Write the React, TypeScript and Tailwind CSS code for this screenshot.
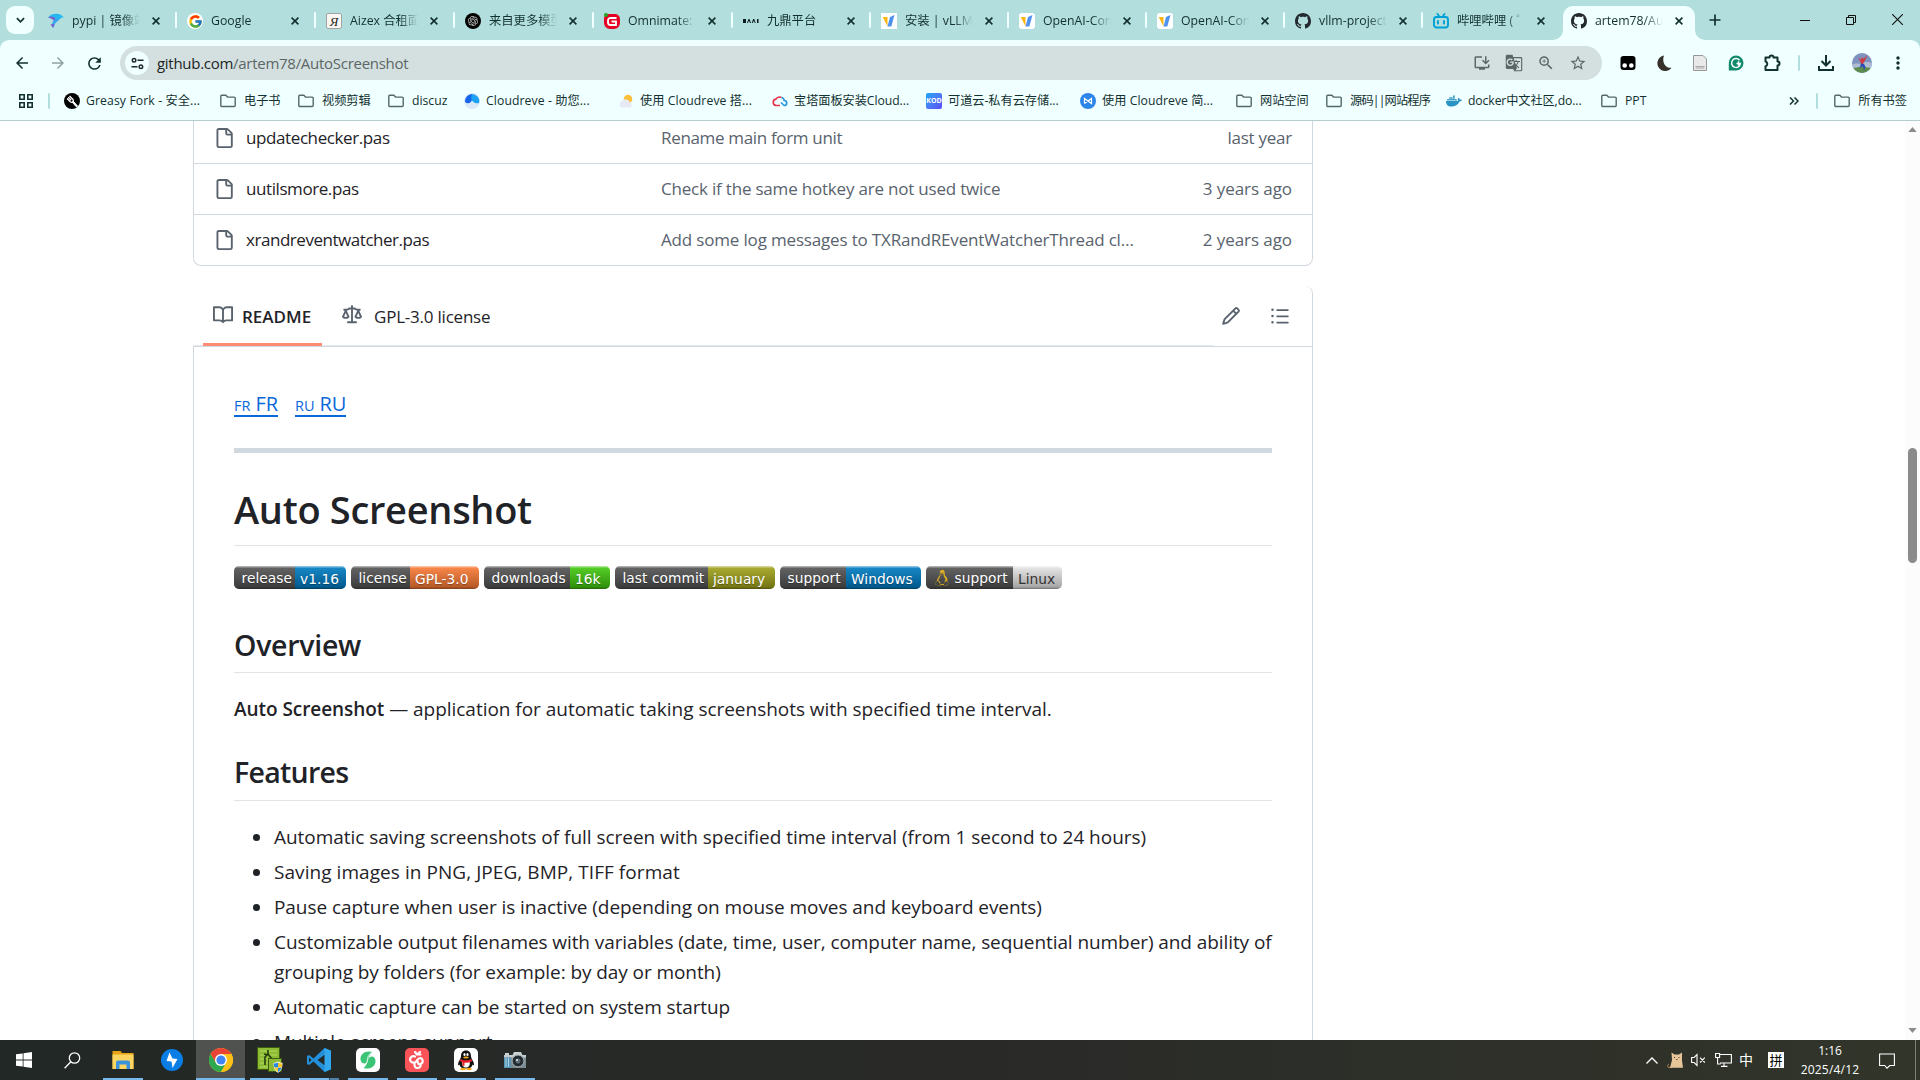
import React, { type ReactNode } from "react";
import { FcGoogle } from "react-icons/fc";
import { FaDocker, FaLinux } from "react-icons/fa";
import { RiOpenaiFill } from "react-icons/ri";
import {
  MdArrowBack,
  MdArrowForward,
  MdRefresh,
  MdOutlineInstallDesktop,
  MdGTranslate,
  MdZoomIn,
  MdStarBorder,
  MdMoreVert,
} from "react-icons/md";

/* ---------- Octicons ---------- */

function Octicon({ d, className }: { d: string; className?: string }) {
  return (
    <svg viewBox="0 0 16 16" fill="currentColor" className={className}>
      <path d={d} />
    </svg>
  );
}

const FILE =
  "M2 1.75C2 .784 2.784 0 3.75 0h6.586c.464 0 .909.184 1.237.513l2.914 2.914c.329.328.513.773.513 1.237v9.586A1.75 1.75 0 0 1 13.25 16h-9.5A1.75 1.75 0 0 1 2 14.25Zm1.75-.25a.25.25 0 0 0-.25.25v12.5c0 .138.112.25.25.25h9.5a.25.25 0 0 0 .25-.25V6h-2.75A1.75 1.75 0 0 1 9 4.25V1.5Zm6.75.062V4.25c0 .138.112.25.25.25h2.688l-.011-.013-2.914-2.914-.013-.011Z";
const BOOK =
  "M0 1.75A.75.75 0 0 1 .75 1h4.253c1.227 0 2.317.59 3 1.501A3.743 3.743 0 0 1 11.006 1h4.245a.75.75 0 0 1 .75.75v10.5a.75.75 0 0 1-.75.75h-4.507a2.25 2.25 0 0 0-1.591.659l-.622.621a.75.75 0 0 1-1.06 0l-.622-.621A2.25 2.25 0 0 0 5.258 13H.75a.75.75 0 0 1-.75-.75Zm7.251 10.324.004-5.073-.002-2.253A2.25 2.25 0 0 0 5.003 2.5H1.5v9h3.757a3.75 3.75 0 0 1 1.994.574ZM8.755 4.75l-.004 7.322a3.752 3.752 0 0 1 1.992-.572H14.5v-9h-3.495a2.25 2.25 0 0 0-2.25 2.25Z";
const LAW =
  "M8.75.75V2h.985c.304 0 .603.08.867.231l1.29.736c.038.022.08.033.124.033h2.234a.75.75 0 0 1 0 1.5h-.427l2.111 4.692a.75.75 0 0 1-.154.838l-.53-.53.529.531-.001.002-.002.002-.006.006-.006.005-.01.01-.045.04c-.21.176-.441.327-.686.45C14.556 10.78 13.88 11 13 11a4.498 4.498 0 0 1-2.023-.454 3.544 3.544 0 0 1-.686-.45l-.045-.04-.016-.015-.006-.006-.004-.004v-.001a.75.75 0 0 1-.154-.838L12.178 4.5h-.162c-.305 0-.604-.079-.868-.231l-1.29-.736a.245.245 0 0 0-.124-.033H8.75V13h2.5a.75.75 0 0 1 0 1.5h-6.5a.75.75 0 0 1 0-1.5h2.5V3.5h-.984a.245.245 0 0 0-.124.033l-1.289.737c-.265.15-.564.23-.869.23h-.162l2.112 4.692a.75.75 0 0 1-.154.838l-.53-.53.529.531-.001.002-.002.002-.006.006-.016.015-.045.04c-.21.176-.441.327-.686.45C4.556 10.78 3.88 11 3 11a4.498 4.498 0 0 1-2.023-.454 3.544 3.544 0 0 1-.686-.45l-.045-.04-.016-.015-.006-.006-.004-.004v-.001a.75.75 0 0 1-.154-.838L2.178 4.5H1.75a.75.75 0 0 1 0-1.5h2.234a.249.249 0 0 0 .125-.033l1.288-.737c.265-.15.564-.23.869-.23h.984V.75a.75.75 0 0 1 1.5 0Zm2.945 8.477c.285.135.718.273 1.305.273s1.02-.138 1.305-.273L13 6.327Zm-10 0c.285.135.718.273 1.305.273s1.02-.138 1.305-.273L3 6.327Z";
const PENCIL =
  "M11.013 1.427a1.75 1.75 0 0 1 2.474 0l1.086 1.086a1.75 1.75 0 0 1 0 2.474l-8.61 8.61c-.21.21-.47.364-.756.445l-3.251.93a.75.75 0 0 1-.927-.928l.929-3.25c.081-.286.235-.547.445-.758l8.61-8.61Zm.176 4.823L9.75 4.81l-6.286 6.287a.253.253 0 0 0-.064.108l-.558 1.953 1.953-.558a.253.253 0 0 0 .108-.064Zm1.238-3.763a.25.25 0 0 0-.354 0L10.811 3.75l1.439 1.44 1.263-1.263a.25.25 0 0 0 0-.354Z";
const LIST =
  "M5.75 2.5h8.5a.75.75 0 0 1 0 1.5h-8.5a.75.75 0 0 1 0-1.5Zm0 5h8.5a.75.75 0 0 1 0 1.5h-8.5a.75.75 0 0 1 0-1.5Zm0 5h8.5a.75.75 0 0 1 0 1.5h-8.5a.75.75 0 0 1 0-1.5ZM2 14a1 1 0 1 1 0-2 1 1 0 0 1 0 2Zm1-6a1 1 0 1 1-2 0 1 1 0 0 1 2 0ZM2 4a1 1 0 1 1 0-2 1 1 0 0 1 0 2Z";
const GITHUB =
  "M8 0c4.42 0 8 3.58 8 8a8.013 8.013 0 0 1-5.45 7.59c-.4.08-.55-.17-.55-.38 0-.27.01-1.13.01-2.2 0-.75-.25-1.23-.54-1.48 1.78-.2 3.65-.88 3.65-3.95 0-.88-.31-1.59-.82-2.15.08-.2.36-1.02-.08-2.12 0 0-.67-.22-2.2.82-.64-.18-1.32-.27-2-.27-.68 0-1.36.09-2 .27-1.53-1.03-2.2-.82-2.2-.82-.44 1.1-.16 1.92-.08 2.12-.51.56-.82 1.28-.82 2.15 0 3.06 1.86 3.75 3.64 3.95-.23.2-.44.55-.51 1.07-.46.21-1.61.55-2.33-.66-.15-.24-.6-.83-1.23-.82-.67.01-.27.38.01.53.34.19.73.9.82 1.13.16.45.68 1.31 2.69.94 0 .67.01 1.3.01 1.49 0 .21-.15.45-.55.38A7.995 7.995 0 0 1 0 8c0-4.42 3.58-8 8-8Z";

/* ---------- Favicons ---------- */

const PypiIcon = () => (
  <svg viewBox="0 0 16 16" className="size-4">
    <path d="M0 4.500C2 1.500 5 1 8 .800c3-.2 5 .4 7.800 3.700-1.500-.3-2.500 0-3.300 1L8.500 8 6 5.500Z" fill="#25b8f0" />
    <path d="M0 4.500C2.500 3 5 3.300 7 5l1.500 2.500-2 1C4.500 6 2.500 4.800 0 4.500Z" fill="#7a62c9" />
    <path d="M6 7c1.500-1.500 4-1.500 6-1.500C10.500 8.500 7 9 6.500 12.500L5 15C3.500 12 4 9 6 7Z" fill="#36a4ee" />
    <path d="M2.500 11.500 6 10.800 5.300 15Z" fill="#8257c9" />
  </svg>
);
const GoogleIcon = () => (
  <div className="flex size-4 items-center justify-center rounded-full bg-white">
    <FcGoogle className="size-[15px]" />
  </div>
);
const AizexIcon = () => (
  <div className="flex size-4 items-center justify-center rounded-[2px] border border-[#a3a3a3] bg-[#faf7f2] font-['Liberation_Serif',serif] text-[13px] leading-none text-[#222] italic">
    Я
  </div>
);
const GptIcon = () => (
  <div className="flex size-4 items-center justify-center rounded-full bg-black">
    <RiOpenaiFill className="size-3 text-[#cfcfcf]" />
  </div>
);
const OmniIcon = () => (
  <svg viewBox="0 0 16 16" className="size-4">
    <path d="M4 1h7a5 5 0 0 1 5 5v4a6 6 0 0 1-6 6H6a6 6 0 0 1-6-6V6a5 5 0 0 1 4-5Z" fill="#e60023" />
    <path d="M12.500 5H6.500A2.500 2.500 0 0 0 4 7.500v2A2.500 2.500 0 0 0 6.500 12H12V8.500H7.500" fill="none" stroke="#fff" strokeWidth="1.800" />
    <circle cx="2" cy="2" r="2" fill="#23a523" />
  </svg>
);
const BaaiIcon = () => (
  <svg viewBox="0 0 16 16" className="size-4" fill="#0b1a1a">
    <path d="M0 6h3v4H0ZM4 10l1.500-4h1L8 10H6.800V8.500H5.200V10ZM8.700 10l1.500-4h1l1.500 4h-1.200V8.500H9.900V10ZM14 6h1.500v4H14Z" />
  </svg>
);
const VllmIcon = ({ rounded }: { rounded?: boolean }) => (
  <svg viewBox="0 0 16 16" className="size-4">
    <rect width="16" height="16" rx={rounded ? 3 : 0} fill="#fff" />
    <path d="M2 4h4.500v9.500L2 4.500Z" fill="#fdb515" />
    <path d="m6.500 13.500 2.500-9.500 4.500-2-3.200 11.500Z" fill="#4f92f0" />
  </svg>
);
const GithubIcon = () => <Octicon d={GITHUB} className="size-4 text-[#24292f]" />;
const BiliIcon = () => (
  <svg viewBox="0 0 16 16" className="size-4" fill="none" stroke="#00a1d6" strokeWidth="1.900">
    <rect x="1" y="4" width="14" height="10.500" rx="2.500" />
    <path d="m4.500 1 2 2.700M11.500 1l-2 2.700M5 8v2.500M11 8v2.500" strokeLinecap="round" />
  </svg>
);

/* ---------- Tab strip ---------- */

type Tab = { title: string; icon: ReactNode; w: string; sep?: boolean; active?: boolean };

const WIDE = "w-[139px]";
const SLIM = "w-[138px]";

const TABS: Tab[] = [
  { w: WIDE, title: "pypi | 镜像站使", icon: <PypiIcon />, sep: true },
  { w: WIDE, title: "Google", icon: <GoogleIcon />, sep: true },
  { w: WIDE, title: "Aizex 合租面板", icon: <AizexIcon />, sep: true },
  { w: WIDE, title: "来自更多模型的", icon: <GptIcon />, sep: true },
  { w: WIDE, title: "Omnimate: AI", icon: <OmniIcon />, sep: true },
  { w: SLIM, title: "九鼎平台", icon: <BaaiIcon />, sep: true },
  { w: SLIM, title: "安装 | vLLM 中", icon: <VllmIcon />, sep: true },
  { w: SLIM, title: "OpenAI-Comp", icon: <VllmIcon rounded />, sep: true },
  { w: SLIM, title: "OpenAI-Comp", icon: <VllmIcon rounded />, sep: true },
  { w: SLIM, title: "vllm-project/v", icon: <GithubIcon />, sep: true },
  { w: SLIM, title: "哔哩哔哩 ( ゜-゜", icon: <BiliIcon /> },
  { w: SLIM, title: "artem78/Auto", icon: <GithubIcon />, active: true },
];

function TabItem({ tab }: { tab: Tab }) {
  return (
    <div className={`flex h-full shrink-0 items-end justify-between ${tab.w}`}>
      <div
        className={
          tab.active
            ? "relative flex h-[34px] w-[132px] items-center rounded-t-[10px] bg-[#f0ffff] pb-1 pl-2"
            : "relative flex h-[34px] w-[132px] items-center pb-1 pl-2"
        }
      >
        {tab.active && (
          <>
            <svg viewBox="0 0 10 10" className="absolute bottom-0 -left-[10px] size-[10px]">
              <path d="M10 0v10H0A10 10 0 0 0 10 0Z" fill="#f0ffff" />
            </svg>
            <svg viewBox="0 0 10 10" className="absolute -right-[10px] bottom-0 size-[10px]">
              <path d="M0 0v10h10A10 10 0 0 1 0 0Z" fill="#f0ffff" />
            </svg>
          </>
        )}
        <span className="size-4 shrink-0">{tab.icon}</span>
        <span className="ml-2 w-[68px] overflow-hidden text-[12.3px] leading-5 whitespace-nowrap text-[#12302f] [mask-image:linear-gradient(to_right,#000_72%,transparent)]">
          {tab.title}
        </span>
        <svg viewBox="0 0 8 8" className="ml-[12px] size-2" stroke="#12302f" strokeWidth="1.600" fill="none">
          <path d="m.6.600 6.800 6.800M7.400.600.600 7.400" />
        </svg>
      </div>
      {tab.sep && <div className="mr-[2px] mb-[12px] h-4 w-[2px] rounded-full bg-[#f0ffff]" />}
    </div>
  );
}

function TabStrip() {
  return (
    <div className="flex h-10 w-full items-start bg-[#b2dfdd]">
      <div className="mt-1.5 ml-1.5 flex h-7 w-7 items-center justify-center rounded-[9px] bg-[#f0ffff]">
        <svg viewBox="0 0 10 6" className="h-[6px] w-[9px]" fill="none" stroke="#12302f" strokeWidth="1.900">
          <path d="m1 1 4 4 4-4" />
        </svg>
      </div>
      <div className="ml-1.5 flex h-10">
        {TABS.map((t, i) => (
          <TabItem key={i} tab={t} />
        ))}
      </div>
      <svg viewBox="0 0 12 12" className="mt-[14px] ml-[8px] size-3" stroke="#12302f" strokeWidth="1.700">
        <path d="M6 .5v11M.5 6h11" />
      </svg>
      <div className="mt-[14px] mr-[17px] ml-auto flex items-center gap-[36px]">
        <svg viewBox="0 0 10 10" className="size-[10px]" stroke="#111" strokeWidth="1">
          <path d="M0 5.500h10" />
        </svg>
        <svg viewBox="0 0 10 10" className="size-[10px]" stroke="#111" fill="none">
          <path d="M.5 2.500h7v7h-7ZM2.500 2.500v-2h7v7h-2" />
        </svg>
        <svg viewBox="0 0 10 10" className="size-[11px]" stroke="#111" fill="none">
          <path d="m0 0 10 10M10 0 0 10" />
        </svg>
      </div>
    </div>
  );
}

/* ---------- Toolbar ---------- */

const Slot = ({ w, children }: { w: string; children: ReactNode }) => (
  <div className={`flex h-full shrink-0 items-center justify-center ${w}`}>{children}</div>
);

function Toolbar() {
  return (
    <div className="bg-[#b2dfdd]">
      <div className="flex h-[46px] w-full items-center rounded-t-[9px] bg-[#f0ffff] text-[#12302f]">
        <Slot w="w-[36px] ml-1">
          <MdArrowBack className="size-[18px]" />
        </Slot>
        <Slot w="w-[36px]">
          <MdArrowForward className="size-[18px] text-[#8fa3a3]" />
        </Slot>
        <Slot w="w-[36px]">
          <MdRefresh className="size-[19px]" />
        </Slot>
        <div className="ml-2 flex h-[34px] w-[1482px] items-center rounded-full bg-[#d4e0e0] pl-[5px]">
          <div className="flex size-6 items-center justify-center rounded-full bg-[#f0ffff]">
            <svg viewBox="0 0 14 14" className="size-[13px]" fill="none" stroke="#222b2b" strokeWidth="1.600">
              <circle cx="3.300" cy="3.500" r="1.900" />
              <path d="M7 3.500h6.500M.5 10.500H7" />
              <circle cx="10.700" cy="10.500" r="1.900" />
            </svg>
          </div>
          <span className="mb-px ml-[8px] flex-1 text-[15px] leading-6 tracking-[-0.28px] whitespace-nowrap text-[#5b6666]">
            <span className="text-[#1b2525]">github.com</span>/artem78/AutoScreenshot
          </span>
          <div className="mr-[8px] flex items-center text-[#5c6666]">
            <Slot w="w-8">
              <MdOutlineInstallDesktop className="size-[18px]" />
            </Slot>
            <Slot w="w-8">
              <MdGTranslate className="size-[18px]" />
            </Slot>
            <Slot w="w-8">
              <MdZoomIn className="size-[18px]" />
            </Slot>
            <Slot w="w-8">
              <MdStarBorder className="size-[18px]" />
            </Slot>
          </div>
        </div>
        <Slot w="w-[36px] ml-2">
          <svg viewBox="0 0 16 16" className="size-4">
            <rect x=".5" y="1" width="15" height="14" rx="3" fill="#000" />
            <circle cx="4.700" cy="10.500" r="2.300" fill="#fff" />
            <circle cx="11.300" cy="10.500" r="2.300" fill="#fff" />
          </svg>
        </Slot>
        <Slot w="w-[36px]">
          <svg viewBox="0 0 16 16" className="size-4">
            <path d="M8 .5a7.800 7.800 0 1 0 7.500 12.300C9.500 13.500 5.500 7 8 .5Z" fill="#37312c" />
          </svg>
        </Slot>
        <Slot w="w-[36px]">
          <svg viewBox="0 0 16 16" className="size-4">
            <path d="M1.500.5h9.500l3.500 3.500v11.500h-13Z" fill="#e9e9e9" stroke="#969696" />
            <path d="M3.500 11.500h9M3.500 13h9" stroke="#a8a8a8" />
          </svg>
        </Slot>
        <Slot w="w-[36px]">
          <svg viewBox="0 0 16 16" className="size-4">
            <path d="M8 .5a7.500 7.500 0 1 1 0 15H.8V8A7.300 7.300 0 0 1 8 .5Z" fill="#0f8a6d" />
            <path d="M11.500 5.300A4.400 4.400 0 1 0 12.400 8.500H8.500M10.500 6.300v4.200" fill="none" stroke="#fff" strokeWidth="1.500" />
          </svg>
        </Slot>
        <Slot w="w-[36px]">
          <svg viewBox="0 0 18 18" className="size-[18px]" fill="none" stroke="#12302f" strokeWidth="2" strokeLinejoin="round">
            <path d="M2.500 3.500h4a2 2 0 0 1 4 0h4v4a2 2 0 0 1 0 4v4.500h-12v-3.700a2.500 2.500 0 0 0 0-4.800Z" />
          </svg>
        </Slot>
        <div className="mx-[8px] h-4 w-[2px] rounded-full bg-[#b2dfdd]" />
        <Slot w="w-[36px]">
          <svg viewBox="0 0 16 16" className="size-4" fill="none" stroke="#12302f" strokeWidth="2">
            <path d="M8 0v10M3.500 6 8 10.500 12.500 6M1 11v3.900h14V11" />
          </svg>
        </Slot>
        <Slot w="w-[36px]">
          <svg viewBox="0 0 20 20" className="size-5 rounded-full">
            <rect width="20" height="20" fill="#7e93bd" />
            <path d="M0 12c4-3 8 0 11-2 3-1.500 6-1 9 0v6H0Z" fill="#aebbd3" />
            <path d="M0 15.500c6-2 14-2 20 0V20H0Z" fill="#5c8d4e" />
            <path d="m6 4.500 3 2 1-2.500 1.500 2L15.500 2 13 7.500l-1.500 2-.5 2-2-.5-.5-2.500Z" fill="#d13a3f" />
            <path d="m9 10.500 3 .5 1.500 3-1.500 4-.5-3.500-1.500-1-2.500 1.500Z" fill="#2a4bb5" />
          </svg>
        </Slot>
        <Slot w="w-[36px]">
          <MdMoreVert className="size-[20px]" />
        </Slot>
      </div>
    </div>
  );
}

/* ---------- Bookmarks ---------- */

const FolderIcon = () => (
  <svg viewBox="0 0 16 16" className="size-4" fill="none" stroke="#52686a" strokeWidth="1.400">
    <path d="M.8 3.300a1 1 0 0 1 1-1h4l1.700 1.800h6.700a1 1 0 0 1 1 1v7.400a1 1 0 0 1-1 1H1.800a1 1 0 0 1-1-1Z" />
  </svg>
);

type Mark = { w: string; icon: ReactNode; label: string; gap?: string; track?: string };

const MARKS: Mark[] = [
  {
    w: "w-[156px]",
    label: "Greasy Fork - 安全...",
    gap: "ml-[6px]",
    track: "tracking-[0.12px]",
    icon: (
      <svg viewBox="0 0 16 16" className="size-4">
        <circle cx="8" cy="8" r="8" fill="#000" />
        <path d="m8.500 9.500 4 4.500 1-1-4-4.500Z" fill="#fff" stroke="#fff" />
        <path d="M3 5.500 6.500 9c1.800 1 3.500-.8 2.500-2.500L5.500 3M4.200 4.200l3 3" stroke="#fff" strokeWidth="1.300" fill="none" />
      </svg>
    ),
  },
  { w: "w-[78px]", label: "电子书", icon: <FolderIcon /> },
  { w: "w-[90px]", label: "视频剪辑", icon: <FolderIcon /> },
  { w: "w-[76px]", label: "discuz", icon: <FolderIcon /> },
  {
    w: "w-[154px]",
    label: "Cloudreve - 助您...",
    gap: "ml-[6px]",
    track: "tracking-[0.1px]",
    icon: (
      <svg viewBox="0 0 16 16" className="size-4">
        <circle cx="8" cy="8" r="8" fill="#d9e9f8" />
        <path d="M1 9A7.200 7.200 0 0 1 8 1l.5 4.500C7 10.500 4 11.500 1 9Z" fill="#1565ea" />
        <path d="M8 1a7.200 7.200 0 0 1 7 9c-4 1-7-1-8-5Z" fill="#1da1f2" />
      </svg>
    ),
  },
  {
    w: "w-[154px]",
    label: "使用 Cloudreve 搭...",
    gap: "ml-[6px]",
    track: "tracking-[0.1px]",
    icon: (
      <svg viewBox="0 0 16 16" className="size-4">
        <circle cx="10" cy="6" r="4.300" fill="#fbbf3c" />
        <path d="M4 14.500a3.200 3.200 0 0 1 .5-6.300 4 4 0 0 1 7.300 1.300 2.600 2.600 0 0 1 .2 5Z" fill="#e7e9f5" />
      </svg>
    ),
  },
  {
    w: "w-[154px]",
    label: "宝塔面板安装Cloud...",
    gap: "ml-[6px]",
    track: "tracking-[-0.05px]",
    icon: (
      <svg viewBox="0 0 16 16" className="size-4" fill="none" strokeWidth="1.700">
        <path d="M8 12.500H4A3.200 3.200 0 0 1 3.800 6.200 4.300 4.300 0 0 1 9.500 4.500" stroke="#e8334a" />
        <path d="M9.500 4.500c1.700.5 2.600 1.700 2.700 3a2.500 2.500 0 0 1 0 5L9 9.500" stroke="#2a97e0" />
      </svg>
    ),
  },
  {
    w: "w-[154px]",
    label: "可道云-私有云存储...",
    gap: "ml-[6px]",
    track: "tracking-[-0.03px]",
    icon: (
      <div className="flex size-4 items-center justify-center rounded-[2px] bg-linear-to-br from-[#12a5f4] to-[#5a4cf5] text-[7px] leading-none font-bold text-white">
        KOD
      </div>
    ),
  },
  {
    w: "w-[156px]",
    label: "使用 Cloudreve 简...",
    gap: "ml-[6px]",
    track: "tracking-[0.05px]",
    icon: (
      <svg viewBox="0 0 16 16" className="size-4">
        <circle cx="8" cy="8" r="8" fill="#2c86ea" />
        <path d="M4.500 10.500v-5l7 5v-5l-7 5" stroke="#fff" strokeWidth="1.200" fill="none" />
      </svg>
    ),
  },
  { w: "w-[90px]", label: "网站空间", icon: <FolderIcon /> },
  { w: "w-[120px]", label: "源码||网站程序", icon: <FolderIcon />, track: "tracking-[-0.8px]" },
  {
    w: "w-[155px]",
    label: "docker中文社区,do...",
    gap: "ml-[6px]",
    track: "tracking-[-0.1px]",
    icon: <FaDocker className="size-4 text-[#2a93c4]" />,
  },
  { w: "w-[60px]", label: "PPT", icon: <FolderIcon /> },
];

function MarkItem({ m }: { m: Mark }) {
  return (
    <div className={`flex shrink-0 items-center ${m.w}`}>
      <span className="size-4 shrink-0">{m.icon}</span>
      <span className={`whitespace-nowrap ${m.gap ?? "ml-2"} ${m.track ?? ""}`}>{m.label}</span>
    </div>
  );
}

function BookmarksBar() {
  return (
    <div className="flex h-[35px] w-full items-center border-b border-[#b4cccb] bg-[#f0ffff] pb-[5px] text-[12.2px] leading-5 text-[#12302f]">
      <svg viewBox="0 0 14 14" className="ml-[19px] size-[14px]" fill="none" stroke="#12302f" strokeWidth="1.600">
        <path d="M.8.800h4.400v4.400H.8ZM8.800.800h4.400v4.400H8.800ZM.8 8.800h4.400v4.400H.8ZM8.800 8.800h4.400v4.400H8.800Z" />
      </svg>
      <div className="mr-[14px] ml-[15px] h-4 w-[2px] rounded-full bg-[#b2dfdd]" />
      {MARKS.map((m, i) => (
        <MarkItem key={i} m={m} />
      ))}
      <div className="mr-[13px] ml-auto flex items-center">
        <svg viewBox="0 0 10 8" className="h-2 w-[10px]" fill="none" stroke="#12302f" strokeWidth="1.500">
          <path d="m1 .5 3.500 3.500L1 7.500M5.500.5 9 4 5.500 7.500" />
        </svg>
        <div className="mr-[16px] ml-[17px] h-4 w-[2px] rounded-full bg-[#b2dfdd]" />
        <FolderIcon />
        <span className="ml-2 whitespace-nowrap">所有书签</span>
      </div>
    </div>
  );
}

/* ---------- Repository page ---------- */

const FILES = [
  {
    name: "updatechecker.pas",
    msg: "Rename main form unit",
    age: "last year",
    nameTrack: "tracking-[-0.4px]",
    msgTrack: "tracking-[-0.33px]",
    ageTrack: "tracking-[-0.25px]",
  },
  {
    name: "uutilsmore.pas",
    msg: "Check if the same hotkey are not used twice",
    age: "3 years ago",
    nameTrack: "tracking-[-0.42px]",
    msgTrack: "tracking-[-0.2px]",
    ageTrack: "tracking-[-0.08px]",
  },
  {
    name: "xrandreventwatcher.pas",
    msg: "Add some log messages to TXRandREventWatcherThread cl…",
    age: "2 years ago",
    nameTrack: "tracking-[-0.46px]",
    msgTrack: "tracking-[-0.17px]",
    ageTrack: "tracking-[-0.08px]",
  },
];

function FileTable() {
  return (
    <div className="ml-[193px] w-[1120px] rounded-b-[8px] border-x border-b border-[#d1d9e0] text-[17px] leading-6 whitespace-nowrap">
      {FILES.map((f, i) => (
        <div
          key={f.name}
          className={
            i === 0
              ? "flex h-[42px] items-end pr-5 pb-[13px] pl-[20px]"
              : "flex h-[51px] items-end border-t border-[#d1d9e0] pr-5 pb-[13px] pl-[20px]"
          }
        >
          <Octicon d={FILE} className="mb-[2px] size-5 text-[#59636e]" />
          <span className={`ml-[12px] w-[415px] text-[#1f2328] ${f.nameTrack}`}>{f.name}</span>
          <span className={`flex-1 text-[#59636e] ${f.msgTrack}`}>{f.msg}</span>
          <span className={`text-[#59636e] ${f.ageTrack}`}>{f.age}</span>
        </div>
      ))}
    </div>
  );
}

type BadgeData = {
  label: string;
  value: string;
  lw: string;
  rw: string;
  color: string;
  dark?: boolean;
  penguin?: boolean;
};

const BADGES: BadgeData[] = [
  { label: "release", value: "v1.16", lw: "w-[61px]", rw: "w-[51px]", color: "bg-[#007ec6]" },
  { label: "license", value: "GPL-3.0", lw: "w-[59px]", rw: "w-[69px]", color: "bg-[#fe7d37]" },
  { label: "downloads", value: "16k", lw: "w-[86px]", rw: "w-[40px]", color: "bg-[#44cc11]" },
  { label: "last commit", value: "january", lw: "w-[93px]", rw: "w-[67px]", color: "bg-[#a4a61d]" },
  { label: "support", value: "Windows", lw: "w-[66px]", rw: "w-[75px]", color: "bg-[#007ec6]" },
  { label: "support", value: "Linux", lw: "w-[87px]", rw: "w-[49px]", color: "bg-[#e8e8e8]", dark: true, penguin: true },
];

const SHEEN =
  "bg-[image:linear-gradient(to_bottom,rgba(255,255,255,.65)_0%,rgba(190,190,190,.12)_10%,rgba(0,0,0,.28)_90%,rgba(0,0,0,.5)_100%)]";

function Badge({ b }: { b: BadgeData }) {
  return (
    <div className="flex h-[23px] overflow-hidden rounded-[5px] font-['DejaVu_Sans',sans-serif] text-[13.75px] leading-[24px] tracking-[0.05px] whitespace-nowrap">
      <div
        className={`flex items-center bg-[#555] pl-[7.5px] text-white [text-shadow:0_1px_rgba(1,1,1,.3)] ${SHEEN} ${b.lw}`}
      >
        {b.penguin && <FaLinux className="mr-[5px] size-4 text-[#e8b61c]" />}
        <span className="pt-px">{b.label}</span>
      </div>
      <div
        className={
          b.dark
            ? `pt-px pl-[5px] text-[#333] [text-shadow:0_1px_rgba(204,204,204,.3)] ${SHEEN} ${b.color} ${b.rw}`
            : `pt-px pl-[5px] text-white [text-shadow:0_1px_rgba(1,1,1,.3)] ${SHEEN} ${b.color} ${b.rw}`
        }
      >
        {b.value}
      </div>
    </div>
  );
}

const FEATURES = [
  {
    track: "tracking-[-0.03px]",
    text: "Automatic saving screenshots of full screen with specified time interval (from 1 second to 24 hours)",
  },
  { track: "tracking-[0.06px]", text: "Saving images in PNG, JPEG, BMP, TIFF format" },
  {
    track: "tracking-[-0.065px]",
    text: "Pause capture when user is inactive (depending on mouse moves and keyboard events)",
  },
  {
    track: "tracking-[-0.08px]",
    text: "Customizable output filenames with variables (date, time, user, computer name, sequential number) and ability of grouping by folders (for example: by day or month)",
  },
  { track: "tracking-[-0.08px]", text: "Automatic capture can be started on system startup" },
  { track: "tracking-[-0.06px]", text: "Multiple screens support" },
];

function Readme() {
  return (
    <div className="mt-5 ml-[193px] w-[1120px]">
      <div className="flex h-[60px] items-start rounded-tr-[8px] border-r border-[#d1d9e0] bg-white">
        <div className="flex h-[60px] w-[1021px] rounded-tl-[8px] border-b border-[#e6eaee] pl-[10px]">
          <div className="flex h-[60px] w-[119px] items-center border-b-[3px] border-[#fd8c73] pt-[3px] pl-[10px]">
            <Octicon d={BOOK} className="mb-[3px] size-5 text-[#59636e]" />
            <span className="mt-[2px] ml-[9px] text-[17px] leading-6 font-semibold text-[#1f2328]">README</span>
          </div>
          <div className="flex h-[60px] items-center pl-5">
            <Octicon d={LAW} className="mb-[3px] size-5 text-[#59636e]" />
            <span className="mt-[2px] ml-[12px] text-[17px] leading-6 tracking-[-0.22px] text-[#1f2328]">
              GPL-3.0 license
            </span>
          </div>
        </div>
        <div className="mr-[22px] ml-auto flex h-[60px] items-center gap-[29px] text-[#59636e]">
          <Octicon d={PENCIL} className="size-5" />
          <Octicon d={LIST} className="size-5" />
        </div>
      </div>
      <article className="h-[760px] border-x border-t border-[#d1d9e0] px-10 pt-[42px] text-[19px] leading-[30px] text-[#1f2328]">
        <div className="flex h-[29px] gap-[17px] text-[#0969da]">
          <span className="h-[28px] border-b-2 border-[#0969da]">
            <span className="text-[14.5px] font-medium">FR</span> <span className="text-[20px]">FR</span>
          </span>
          <span className="h-[28px] border-b-2 border-[#0969da]">
            <span className="text-[14.5px] font-medium">RU</span> <span className="text-[20px]">RU</span>
          </span>
        </div>
        <hr className="mt-[30px] h-[5px] border-0 bg-[#d1d9e0]" />
        <h1 className="mt-[31px] h-[62px] border-b border-[#dfe4e9] text-[38px] leading-[50px] font-semibold tracking-[-0.3px]">
          Auto Screenshot
        </h1>
        <div className="mt-5 flex h-[30px] items-start gap-[5px]">
          {BADGES.map((b, i) => (
            <Badge key={i} b={b} />
          ))}
        </div>
        <h2 className="mt-[30px] h-[47px] border-b border-[#dfe4e9] text-[28.5px] leading-[38px] font-semibold tracking-[-0.27px]">
          Overview
        </h2>
        <p className="mt-[21px] h-[29px] tracking-[-0.03px] whitespace-nowrap">
          <strong className="font-semibold tracking-[-0.06px]">Auto Screenshot</strong> — application for automatic
          taking screenshots with specified time interval.
        </p>
        <h2 className="mt-[30px] h-[48px] border-b border-[#dfe4e9] text-[28.5px] leading-[38px] font-semibold tracking-[-0.7px]">
          Features
        </h2>
        <ul className="mt-[21px] space-y-[5px]">
          {FEATURES.map((f) => (
            <li key={f.text} className="flex">
              <span className="mt-[12px] mr-[14px] ml-[19px] size-[7px] shrink-0 rounded-full bg-[#1f2328]" />
              <span className={`w-[1002px] shrink-0 ${f.track}`}>{f.text}</span>
            </li>
          ))}
        </ul>
      </article>
    </div>
  );
}

function Scrollbar() {
  return (
    <div className="flex w-[15px] shrink-0 flex-col items-center bg-[#fcfcfc]">
      <svg viewBox="0 0 10 6" className="mt-[6px] h-[5px] w-[9px]" fill="#8b8b8b">
        <path d="M5 0 10 6H0Z" />
      </svg>
      <div className="mt-[316px] h-[115px] w-[9px] rounded-full bg-[#8b8b8b]" />
      <svg viewBox="0 0 10 6" className="mt-auto mb-[7px] h-[5px] w-[9px]" fill="#8b8b8b">
        <path d="M0 0h10L5 6Z" />
      </svg>
    </div>
  );
}

/* ---------- Taskbar ---------- */

function TaskItem({ children, open, split, active }: { children: ReactNode; open?: boolean; split?: boolean; active?: boolean }) {
  return (
    <div
      className={
        active
          ? "flex h-10 w-[49px] flex-col items-center bg-[#50524f]"
          : "flex h-10 w-[49px] flex-col items-center"
      }
    >
      <div className="flex h-[38px] items-center pt-[2px]">{children}</div>
      {open && (
        <div className={active ? "flex h-[2px] w-full bg-[#76b9ed]" : "flex h-[2px] w-10 justify-end bg-[#76b9ed]"}>
          {split && <div className="h-full w-[10px] border-l border-[#2b4a63] bg-[#527fa5]" />}
        </div>
      )}
    </div>
  );
}

function Taskbar() {
  return (
    <div className="flex h-10 w-full items-center bg-linear-to-r from-[#222825] via-[#292a28] to-[#32352a] text-white">
      <div className="flex w-12 justify-center">
        <svg viewBox="0 0 16 16" className="size-4" fill="#fff">
          <path d="M0 2.300 6.700 1.400v6.200H0ZM7.500 1.300 16 0v7.600H7.500ZM0 8.400h6.700v6.200L0 13.700ZM7.500 8.400H16V16l-8.500-1.300Z" />
        </svg>
      </div>
      <div className="flex w-[50px] justify-center pr-[2px]">
        <svg viewBox="0 0 17 17" className="size-[17px]" fill="none" stroke="#fff" strokeWidth="1.300">
          <circle cx="10.500" cy="6" r="5.200" />
          <path d="M6.800 9.800.6 16.300" />
        </svg>
      </div>
      <TaskItem open>
        <svg viewBox="0 0 24 24" className="size-6">
          <path d="M1.500 3h8l1.500 2h11.500v16h-21Z" fill="#e6a313" />
          <path d="M1.500 6.500h21V21h-21Z" fill="#fcd462" />
          <path d="M5 21v-6.500a2 2 0 0 1 2-2h10a2 2 0 0 1 2 2V21h-3.500v-4.500h-7V21Z" fill="#3a94dc" />
        </svg>
      </TaskItem>
      <TaskItem>
        <svg viewBox="0 0 24 24" className="size-6">
          <circle cx="12" cy="12" r="11" fill="#0b7ee6" />
          <path d="M9.500 4.500 6.500 13l5 .5 1 6.500 5-9-5-.5Z" fill="#fff" />
        </svg>
      </TaskItem>
      <TaskItem open active>
        <svg viewBox="0 0 24 24" className="size-6">
          <circle cx="12" cy="12" r="12" fill="#fbc116" />
          <path d="M12 12v-6h10.400A12 12 0 0 0 12 0a12 12 0 0 0-10.400 6l5.200 9Z" fill="#ea4335" />
          <path d="M1.600 6a12 12 0 0 0 10.400 18l5.200-9H6.800Z" fill="#2da94f" />
          <path d="M17.200 15 12 24A12 12 0 0 0 22.400 6H12Z" fill="#fbc116" />
          <circle cx="12" cy="12" r="6" fill="#fff" />
          <circle cx="12" cy="12" r="4.600" fill="#4285f4" />
        </svg>
      </TaskItem>
      <TaskItem open>
        <svg viewBox="0 0 26 26" className="size-[26px]">
          <rect x=".5" y=".5" width="22" height="22" fill="#8dbb34" stroke="#3d5c12" />
          <path d="M3 4h17M3 8h17M3 12h17M3 16h17M3 20h10" stroke="#b2d95f" />
          <path d="M11 3v4l-3 3v8M11 7l4 5v6M7 7l4 1" stroke="#253c0a" strokeWidth="1.600" fill="none" />
          <rect x="11.500" y="11.500" width="13" height="13" fill="#8dbb34" stroke="#3d5c12" />
          <path d="M21 14.500c1.500 1 3 1.200 4.500 1.200 0 5-1 8-4.500 10-3.500-2-4.500-5-4.500-10 1.500 0 3-.2 4.500-1.200Z" fill="#fff" />
          <path d="M21 15.500v5h-3.700c-.4-1.200-.5-2.500-.5-4 1.500 0 3-.3 4.200-1ZM21 20.500h3.700c-.7 2-1.700 3.300-3.700 4.500Z" fill="#2587e0" />
          <path d="M21 15.500v5h3.700c.4-1.200.5-2.500.5-4-1.500 0-3-.3-4.200-1ZM21 20.500h-3.700c.7 2 1.700 3.300 3.700 4.500Z" fill="#f6c529" />
        </svg>
      </TaskItem>
      <TaskItem open split>
        <svg viewBox="0 0 24 24" className="size-6">
          <path d="M17.500 0 24 2.800v18.400L17.500 24 6.500 13.500 2 17 0 16V8l2-1 4.500 3.500ZM18 6.500 10.500 12l7.500 5.500ZM2 9.500v5L4.500 12Z" fill="#2490db" fillRule="evenodd" />
          <path d="M17.500 0 24 2.800v18.400L17.500 24Z" fill="#33a8ee" />
        </svg>
      </TaskItem>
      <TaskItem open>
        <svg viewBox="0 0 24 24" className="size-6">
          <rect width="24" height="24" rx="5" fill="#fff" />
          <path d="M16.500 4C10 2 4 5.500 4.500 11.500c.4 4 4 5 6 3 2.500-2.500 1.500-7 6-10.500Z" fill="#3cc476" />
          <path d="M7.500 20c6.500 2 12.500-1.500 12-7.500-.4-4-4-5-6-3-2.500 2.500-1.500 7-6 10.500Z" fill="#3cc476" />
          <path d="M15.500 4.500c-5.500 4-3.500 8.500-5 11" stroke="#fff" strokeWidth=".8" fill="none" />
        </svg>
      </TaskItem>
      <TaskItem open>
        <svg viewBox="0 0 24 24" className="size-6">
          <rect width="24" height="24" rx="5" fill="#fb5458" />
          <g fill="none" stroke="#fff" strokeWidth="2.200" strokeLinecap="round" strokeLinejoin="round">
            <path d="M10 8.500a3.300 3.300 0 1 0-.5 6c1 0 1.700-.7 2.500-2 .8-1.300 2-2.500 3.300-2.500a3.200 3.200 0 0 1 0 6.200" />
            <path d="M9.500 15c-.5 3.500 1 5 3 5s3.800-1.800 2.800-4M12 12.500l1.500 3.500M10 4l2 2.500L15 4M12 6.500h3.500" />
          </g>
        </svg>
      </TaskItem>
      <TaskItem open>
        <svg viewBox="0 0 24 24" className="size-6">
          <rect width="24" height="24" rx="5" fill="#fff" />
          <path d="M12 2.500c-3.500 0-5 2.500-5 6 0 2-3 5-3 8 0 1 .8 1 1.500 0 .5 3 3 4 6.500 4s6-1 6.500-4c.7 1 1.500 1 1.500 0 0-3-3-6-3-8 0-3.500-1.500-6-5-6Z" fill="#111" />
          <path d="M8.500 13h7c1 4-.5 6.500-3.500 6.500S7.500 17 8.500 13Z" fill="#fff" />
          <ellipse cx="10.500" cy="6.500" rx="1.100" ry="1.600" fill="#fff" />
          <ellipse cx="13.500" cy="6.500" rx="1.100" ry="1.600" fill="#fff" />
          <ellipse cx="12" cy="9.500" rx="2.800" ry="1" fill="#f6a81c" />
          <path d="M6.500 11c3 1.800 8 1.800 11 0l.5 2.200c-2.500 1.300-5 1.600-7.500 1.500v3h-2v-3.500L6 13.200Z" fill="#e6202c" />
          <ellipse cx="9" cy="21" rx="2.800" ry="1.300" fill="#f6a81c" />
          <ellipse cx="15" cy="21" rx="2.800" ry="1.300" fill="#f6a81c" />
        </svg>
      </TaskItem>
      <TaskItem open>
        <svg viewBox="0 0 24 24" className="size-6">
          <path d="M1 7h22v13H1Z" fill="#7b8b92" />
          <path d="M2 5h4v2H2ZM11 4h7l1.500 3h-10Z" fill="#c9d3d6" />
          <path d="M1 7h22v2.500H1Z" fill="#c3cdd1" />
          <path d="M1 9.500h7V20H1Z" fill="#5895b4" />
          <path d="M3 10v9M5.500 10v9" stroke="#a9d3e6" />
          <circle cx="15" cy="13" r="6" fill="#2b3236" stroke="#aab5b9" />
          <circle cx="15" cy="13" r="3.300" fill="#5c6a73" stroke="#10161a" />
          <circle cx="14" cy="12" r="1.100" fill="#d6e6f0" />
        </svg>
      </TaskItem>

      <div className="ml-auto flex h-10 items-center">
        <svg viewBox="0 0 12 7" className="h-[7px] w-3" fill="none" stroke="#fff" strokeWidth="1.300">
          <path d="m.5 6.500 5.500-5.500 5.500 5.500" />
        </svg>
        <svg viewBox="0 0 16 16" className="ml-[9px] size-4">
          <path d="M5 15.500H1.500C0 14 1 12.500 2 12" stroke="#b08a58" fill="none" />
          <path d="M3 15.800 5 8 4.500.5 7.500 2.500h4.500L15 .5v8l1 7.300Z" fill="#e6c698" />
          <path d="M7.500 5v1M12 5v1M9.300 7.500h1.200" stroke="#4b3620" />
        </svg>
        <svg viewBox="0 0 15 14" className="ml-[8px] h-[14px] w-[15px]" fill="none" stroke="#fff" strokeWidth="1.100">
          <path d="M.6 4.500h2.500L6 1.500v11L3.100 9.500H.6ZM9 4.700l4.800 4.800M13.800 4.700 9 9.500" />
        </svg>
        <svg viewBox="0 0 17 16" className="ml-[9px] h-4 w-[17px]" fill="none" stroke="#fff" strokeWidth="1.100">
          <path d="M5 2.500h11.400v8.500H5M9 11v3M6 14.400h6.500M.6 1.500h4v4h-4ZM2.600 5.500v6.500h3" />
        </svg>
        <span className="ml-[7px] w-[15px] text-[14px] leading-5">中</span>
        <span className="ml-[14px] flex size-4 items-center justify-center bg-white text-[13px] leading-4 text-black">
          拼
        </span>
        <div className="ml-[16px] flex w-[60px] flex-col items-center text-[12px] leading-[19px] whitespace-nowrap">
          <span>1:16</span>
          <span className="tracking-[0.2px]">2025/4/12</span>
        </div>
        <svg viewBox="0 0 16 16" className="mt-px ml-[19px] size-4" fill="none" stroke="#fff" strokeWidth="1.100">
          <path d="M.6 1h14.800v11.500h-4.600L8 15.200l-2.300-2.700H.6Z" />
        </svg>
        <div className="mr-1 ml-[20px] h-10 w-px bg-[#7d7f78]" />
      </div>
    </div>
  );
}

export default function App() {
  return (
    <div className="flex h-[1080px] w-[1920px] flex-col overflow-hidden bg-white font-['Open_Sans','Noto_Sans_CJK_SC',sans-serif]">
      <TabStrip />
      <Toolbar />
      <BookmarksBar />
      <div className="flex h-[919px] overflow-hidden">
        <main className="flex-1">
          <FileTable />
          <Readme />
        </main>
        <Scrollbar />
      </div>
      <Taskbar />
    </div>
  );
}
